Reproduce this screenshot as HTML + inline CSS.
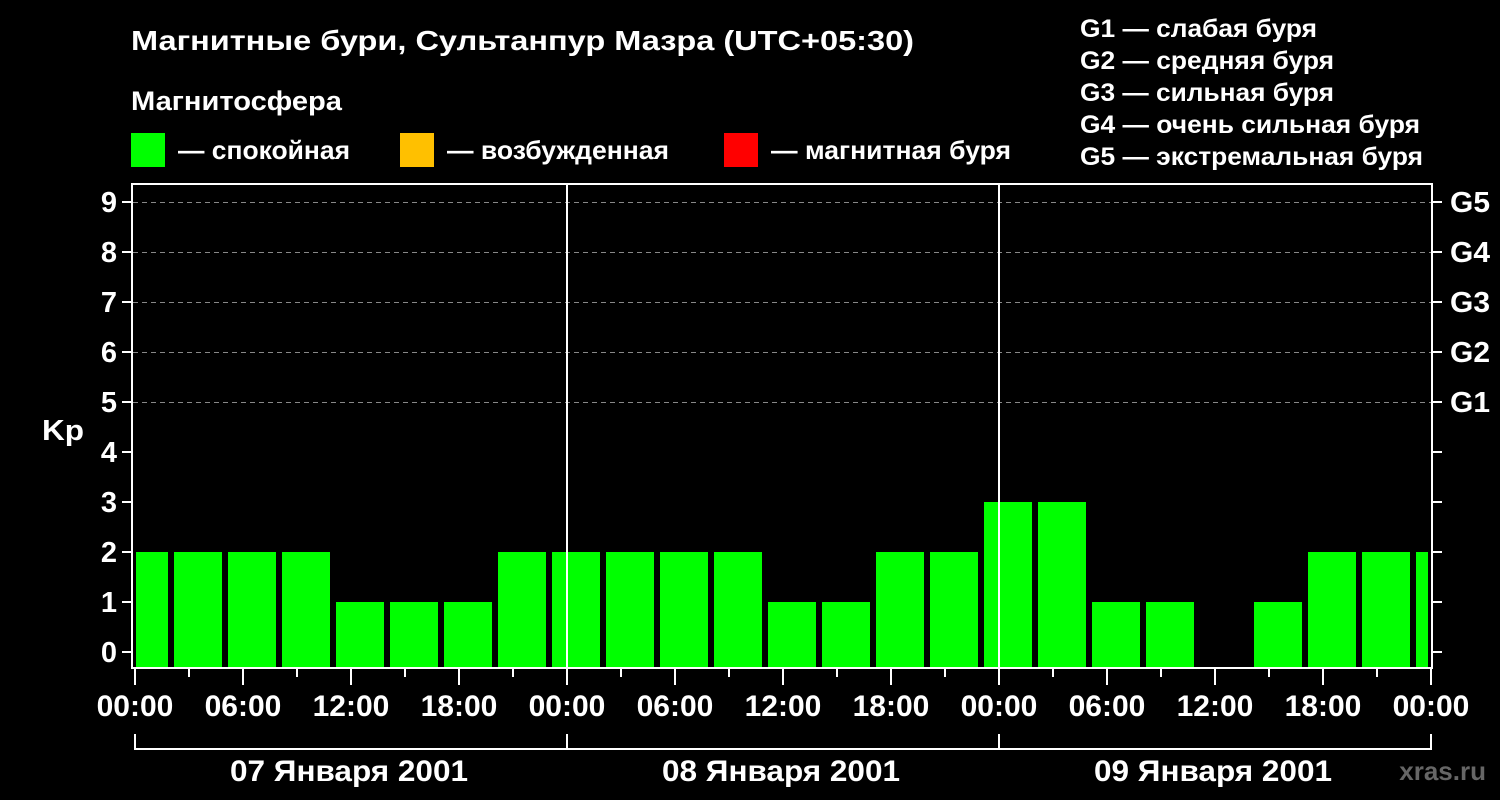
<!DOCTYPE html>
<html><head><meta charset="utf-8"><style>
html,body{margin:0;padding:0;background:#000;}
svg{display:block;}
text{font-family:"Liberation Sans",sans-serif;font-weight:bold;fill:#fff;}
</style></head><body>
<svg width="1500" height="800" viewBox="0 0 1500 800" xmlns="http://www.w3.org/2000/svg">
<rect width="1500" height="800" fill="#000"/>
<text x="131" y="50" font-size="28" textLength="783" lengthAdjust="spacingAndGlyphs">Магнитные бури, Сультанпур Мазра (UTC+05:30)</text>
<text x="131" y="110" font-size="27" textLength="211" lengthAdjust="spacingAndGlyphs">Магнитосфера</text>
<rect x="131" y="133" width="34" height="34" fill="#00ff00"/>
<text x="178" y="159" font-size="26" textLength="172" lengthAdjust="spacingAndGlyphs">— спокойная</text>
<rect x="400" y="133" width="34" height="34" fill="#ffc000"/>
<text x="447" y="159" font-size="26" textLength="222" lengthAdjust="spacingAndGlyphs">— возбужденная</text>
<rect x="724" y="133" width="34" height="34" fill="#ff0000"/>
<text x="771" y="159" font-size="26" textLength="240" lengthAdjust="spacingAndGlyphs">— магнитная буря</text>
<g font-size="25">
<text x="1080" y="37" textLength="237" lengthAdjust="spacingAndGlyphs">G1 — слабая буря</text>
<text x="1080" y="69" textLength="254" lengthAdjust="spacingAndGlyphs">G2 — средняя буря</text>
<text x="1080" y="101" textLength="254" lengthAdjust="spacingAndGlyphs">G3 — сильная буря</text>
<text x="1080" y="133" textLength="340" lengthAdjust="spacingAndGlyphs">G4 — очень сильная буря</text>
<text x="1080" y="165" textLength="343" lengthAdjust="spacingAndGlyphs">G5 — экстремальная буря</text>
</g>
<g stroke="#888" stroke-width="1" stroke-dasharray="5,4">
<line x1="133" y1="202.5" x2="1431" y2="202.5"/>
<line x1="133" y1="252.5" x2="1431" y2="252.5"/>
<line x1="133" y1="302.5" x2="1431" y2="302.5"/>
<line x1="133" y1="352.5" x2="1431" y2="352.5"/>
<line x1="133" y1="402.5" x2="1431" y2="402.5"/>
</g>
<g fill="#00ff00">
<rect x="136" y="552" width="32" height="116"/>
<rect x="174" y="552" width="48" height="116"/>
<rect x="228" y="552" width="48" height="116"/>
<rect x="282" y="552" width="48" height="116"/>
<rect x="336" y="602" width="48" height="66"/>
<rect x="390" y="602" width="48" height="66"/>
<rect x="444" y="602" width="48" height="66"/>
<rect x="498" y="552" width="48" height="116"/>
<rect x="552" y="552" width="48" height="116"/>
<rect x="606" y="552" width="48" height="116"/>
<rect x="660" y="552" width="48" height="116"/>
<rect x="714" y="552" width="48" height="116"/>
<rect x="768" y="602" width="48" height="66"/>
<rect x="822" y="602" width="48" height="66"/>
<rect x="876" y="552" width="48" height="116"/>
<rect x="930" y="552" width="48" height="116"/>
<rect x="984" y="502" width="48" height="166"/>
<rect x="1038" y="502" width="48" height="166"/>
<rect x="1092" y="602" width="48" height="66"/>
<rect x="1146" y="602" width="48" height="66"/>
<rect x="1254" y="602" width="48" height="66"/>
<rect x="1308" y="552" width="48" height="116"/>
<rect x="1362" y="552" width="48" height="116"/>
<rect x="1416" y="552" width="12" height="116"/>
</g>
<g stroke="#fff" stroke-width="2" fill="none">
<polyline points="132,668 132,184 1432,184 1432,668"/>
<line x1="131" y1="668" x2="1433" y2="668"/>
<line x1="567" y1="183" x2="567" y2="668"/>
<line x1="999" y1="183" x2="999" y2="668"/>
<path d="M122 202H131M122 252H131M122 302H131M122 352H131M122 402H131M122 452H131M122 502H131M122 552H131M122 602H131M122 652H131"/>
<path d="M1433 202H1442M1433 252H1442M1433 302H1442M1433 352H1442M1433 402H1442M1433 452H1442M1433 502H1442M1433 552H1442M1433 602H1442M1433 652H1442"/>
<path d="M135 669V685M243 669V685M351 669V685M459 669V685M567 669V685M675 669V685M783 669V685M891 669V685M999 669V685M1107 669V685M1215 669V685M1323 669V685M1431 669V685"/>
<path d="M189 669V677M297 669V677M405 669V677M513 669V677M621 669V677M729 669V677M837 669V677M945 669V677M1053 669V677M1161 669V677M1269 669V677M1377 669V677"/>
<path d="M135 734V749H1431V734M567 734V749M999 734V749"/>
</g>
<g font-size="29" text-anchor="end">
<text x="117" y="212">9</text><text x="117" y="262">8</text><text x="117" y="312">7</text><text x="117" y="362">6</text><text x="117" y="412">5</text><text x="117" y="462">4</text><text x="117" y="512">3</text><text x="117" y="562">2</text><text x="117" y="612">1</text><text x="117" y="662">0</text>
</g>
<g font-size="29">
<text x="1450" y="212" textLength="40" lengthAdjust="spacingAndGlyphs">G5</text><text x="1450" y="262" textLength="40" lengthAdjust="spacingAndGlyphs">G4</text><text x="1450" y="312" textLength="40" lengthAdjust="spacingAndGlyphs">G3</text><text x="1450" y="362" textLength="40" lengthAdjust="spacingAndGlyphs">G2</text><text x="1450" y="412" textLength="40" lengthAdjust="spacingAndGlyphs">G1</text>
</g>
<text x="42" y="440" font-size="29" textLength="42" lengthAdjust="spacingAndGlyphs">Kp</text>
<g font-size="30" text-anchor="middle">
<text x="135" y="716">00:00</text><text x="243" y="716">06:00</text><text x="351" y="716">12:00</text><text x="459" y="716">18:00</text>
<text x="567" y="716">00:00</text><text x="675" y="716">06:00</text><text x="783" y="716">12:00</text><text x="891" y="716">18:00</text>
<text x="999" y="716">00:00</text><text x="1107" y="716">06:00</text><text x="1215" y="716">12:00</text><text x="1323" y="716">18:00</text>
<text x="1431" y="716">00:00</text>
</g>
<g font-size="30" text-anchor="middle">
<text x="349" y="781" textLength="238" lengthAdjust="spacingAndGlyphs">07 Января 2001</text>
<text x="781" y="781" textLength="238" lengthAdjust="spacingAndGlyphs">08 Января 2001</text>
<text x="1213" y="781" textLength="238" lengthAdjust="spacingAndGlyphs">09 Января 2001</text>
</g>
<text x="1486" y="780" font-size="26" text-anchor="end" style="fill:#666">xras.ru</text>
</svg>
</body></html>
